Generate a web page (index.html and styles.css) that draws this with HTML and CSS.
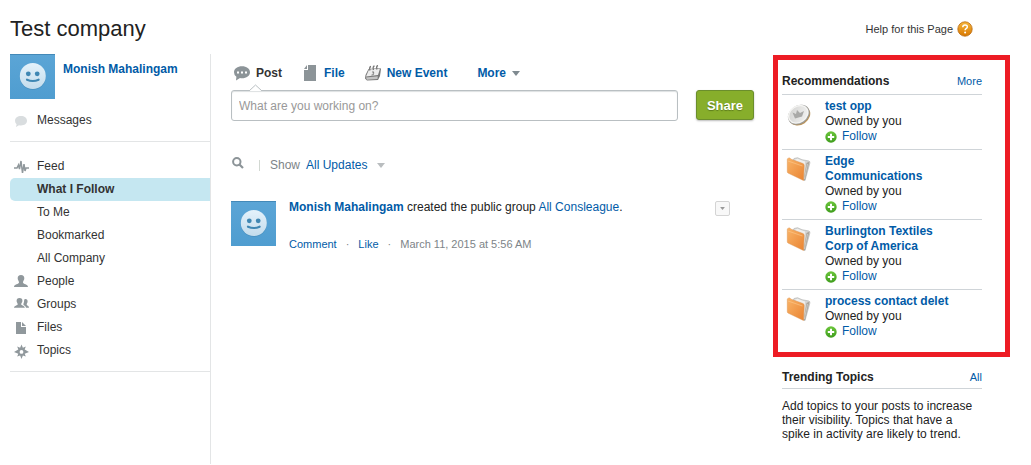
FILE: index.html
```html
<!DOCTYPE html>
<html lang="en">
<head>
    <meta charset="UTF-8">
    <meta name="viewport" content="width=device-width, initial-scale=1.0">
    <title>Test company</title>
    <link rel="stylesheet" href="styles.css">
</head>
<body>
    <!-- shared icons -->
    <svg class="sprite" width="0" height="0" aria-hidden="true">
        <defs>
            <linearGradient id="face-bg" x1="0" y1="0" x2="0" y2="1">
                <stop offset="0" stop-color="#5ba5d6"/><stop offset="1" stop-color="#4f9dd0"/>
            </linearGradient>
            <linearGradient id="face-fill" x1="0" y1="0" x2="0" y2="1">
                <stop offset="0" stop-color="#e4f2fb"/><stop offset="1" stop-color="#c3dcec"/>
            </linearGradient>
            <linearGradient id="folder-fill" x1="0" y1="0" x2="1" y2="1">
                <stop offset="0" stop-color="#f9b468"/><stop offset="1" stop-color="#e98331"/>
            </linearGradient>
            <linearGradient id="green-fill" x1="0" y1="0" x2="0" y2="1">
                <stop offset="0" stop-color="#6cc63c"/><stop offset="1" stop-color="#3e9d1c"/>
            </linearGradient>
            <linearGradient id="coin-fill" x1="0" y1="0" x2="1" y2="1">
                <stop offset="0" stop-color="#d2d2d0"/><stop offset="1" stop-color="#f3f3f2"/>
            </linearGradient>
            <linearGradient id="help-fill" x1="0" y1="0" x2="0" y2="1">
                <stop offset="0" stop-color="#f6b63c"/><stop offset="1" stop-color="#d97800"/>
            </linearGradient>
        </defs>
        <symbol id="face" viewBox="0 0 45 45">
            <rect width="45" height="45" fill="url(#face-bg)"/>
            <path d="M0 .5h45" stroke="#4389b8"/>
            <circle cx="22.800" cy="22.700" r="13" fill="#468fbe"/>
            <circle cx="22.800" cy="22" r="13" fill="url(#face-fill)"/>
            <circle cx="18.300" cy="19.800" r="2.400" fill="#3f87b3"/>
            <circle cx="27.200" cy="19.800" r="2.400" fill="#3f87b3"/>
            <path d="M17 25.700q5.800 2.600 11.600 0" fill="none" stroke="#3f87b3" stroke-width="2.200" stroke-linecap="round"/>
        </symbol>
        <symbol id="folder" viewBox="0 0 26 26">
            <path d="M7 3l1-1.500L11.500.7l4.500 2 7 1.300q1 .5.900 2L19 23.500l-2-1z" fill="#d6d6d4" stroke="#b0b0ae" stroke-width=".6"/>
            <path d="M9 2.500l2.500-.8L16 3.500l3 1-1 14z" fill="#efefee"/>
            <path d="M20.500 6l3-1.500L19 23.500l-1.500-.5z" fill="#aaa59c"/>
            <path d="M21.500 7l-3.200 15" stroke="#e4e2de" stroke-width=".6"/>
            <path d="M1.300 2.500q0-1 1-1.300l1.500-.3 1.200 1.300L17 6.500q1.300.7 1.200 2L17.500 23.500 2 16q-.7-.5-.7-1.500z" fill="url(#folder-fill)" stroke="#dd9450" stroke-width=".5"/>
            <path d="M2 4l14.500 5" stroke="#fbcb92" stroke-width=".6"/>
        </symbol>
        <symbol id="plus" viewBox="0 0 12 12">
            <circle cx="6" cy="6" r="5.700" fill="url(#green-fill)"/>
            <path d="M6 2.800v6.400M2.800 6h6.400" stroke="#fff" stroke-width="2"/>
        </symbol>
        <symbol id="arrow" viewBox="0 0 8 5">
            <path d="M0 0h8L4 5z" fill="currentColor"/>
        </symbol>
    </svg>

    <header class="page-header">
        <h1>Test company</h1>
        <a class="help" href="#">Help for this Page
            <svg width="16" height="16" viewBox="0 0 16 16" aria-hidden="true">
                <circle cx="8" cy="8" r="7.200" fill="url(#help-fill)" stroke="#b96a10" stroke-width=".8"/>
                <path d="M5.800 6.200q0-2.200 2.300-2.200t2.200 1.900q0 1-1.200 1.700-1 .6-1 1.700" fill="none" stroke="#fff" stroke-width="1.500"/>
                <circle cx="8.100" cy="11.500" r="1" fill="#fff"/>
            </svg>
        </a>
    </header>

    <div class="columns">
        <nav class="sidebar">
            <div class="profile">
                <svg class="avatar" aria-hidden="true"><use href="#face"/></svg>
                <a href="#">Monish Mahalingam</a>
            </div>
            <ul class="menu messages">
                <li><a href="#">
                    <svg class="menu-icon" viewBox="0 0 16 16"><path d="M7 3c3.400 0 6 2 6 4.800s-2.600 4.700-6 4.700q-1 0-2-.3L2 14l.6-2.700Q1 10 1 7.800C1 5 3.600 3 7 3z" fill="#d9dddf"/></svg>
                    Messages</a></li>
            </ul>
            <ul class="menu">
                <li><a href="#">
                    <svg class="menu-icon" viewBox="0 0 16 16"><path d="M0 9h3l1.500-3 1 4L7 2l1.500 12L10 5l1 7 1-3h3" fill="none" stroke="#90989c" stroke-width="1.500"/></svg>
                    Feed</a></li>
                <li class="active"><a href="#">What I Follow</a></li>
                <li><a href="#">To Me</a></li>
                <li><a href="#">Bookmarked</a></li>
                <li><a href="#">All Company</a></li>
                <li><a href="#">
                    <svg class="menu-icon" viewBox="0 0 16 16"><path d="M7 1c2.300 0 3.400 1.500 3.300 3.500C10.200 6.300 9 7 9 8.500c0 1.800 5 1.500 5 4.500H0c0-3 5-2.700 5-4.500C5 7 3.800 6.300 3.700 4.500 3.600 2.500 4.700 1 7 1z" fill="#90989c"/></svg>
                    People</a></li>
                <li><a href="#">
                    <svg class="menu-icon" viewBox="0 0 16 16"><path d="M5.500 1c2.200 0 3 1.200 2.900 3-.1 1.600-1.200 2-1.200 3.300 0 1.400 3.600 1.100 3.600 3.500H0c0-2.400 3.700-2.100 3.700-3.500C3.700 6 2.700 5.600 2.600 4c0-1.800.8-3 2.900-3zM11.500 2c1.500 0 2.200 1 2.100 2.400 0 1.400-.9 1.900-.9 3 0 1.200 2.300 1 2.300 3.400h-3c0-2-2.600-2.100-2.600-3.300 0-1.400.7-2 .7-3.800 0-1 .4-1.700 1.400-1.700z" fill="#90989c"/></svg>
                    Groups</a></li>
                <li><a href="#">
                    <svg class="menu-icon" viewBox="0 0 16 16"><path d="M2 2h5v5h5v7H2zM8 2l4 4H8z" fill="#90989c"/></svg>
                    Files</a></li>
                <li><a href="#">
                    <svg class="menu-icon" viewBox="0 0 16 16"><path d="M7.500 1.500l1.400 3.200 2.900-1.200-1.100 3L15 9l-4.300 1.800 1.100 2.800-2.900-1.100-1.400 3.500-1.400-3.500-2.900 1.100 1.100-2.800L0 9l4.300-2.500-1.100-3 2.900 1.200zM7.500 7a1.900 1.900 0 1 0 0 3.800A1.900 1.900 0 0 0 7.500 7z" fill="#90989c" fill-rule="evenodd"/></svg>
                    Topics</a></li>
            </ul>
        </nav>

        <main class="main">
            <div class="tabs">
                <a class="tab current" href="#">
                    <svg width="16" height="16" viewBox="0 0 16 16"><path d="M8 1.200c4.500 0 8 2.500 8 6s-3.500 6-8 6q-1 0-2-.2L2 15.500l.4-3.700Q0 10.300 0 7.200c0-3.500 3.500-6 8-6z" fill="#8c9498"/><path d="M3 6.500h2v2H3zM7 6.500h2v2H7zM11 6.500h2v2h-2z" fill="#fff"/></svg>
                    Post</a>
                <a class="tab" href="#">
                    <svg width="16" height="16" viewBox="0 0 16 16"><path d="M6 0h8v16H2V5h4z" fill="#8c9498"/><path d="M5 0v4H2z" fill="#8c9498"/></svg>
                    File</a>
                <a class="tab" href="#">
                    <svg width="16" height="16" viewBox="0 0 16 16"><path d="M3.500 4L15 3q1 .3.900 1.500L15 11l-2 4-11 .5-2-2L.5 10z" fill="#777"/><path d="M4 4.500l11-1-2 6.500-12 1.500z" fill="#ececec"/><path d="M.8 12.500l12-1.200-.3 2.700-10.500.7z" fill="#c4c4c4"/><path d="M5 5.500q-1-3.500 1-4M8.500 5q-1-3.500 1-4M12 4.500q-1-3.500 1-4" fill="none" stroke="#777" stroke-width="1.300"/><path d="M7 7h2L8 8.300q1.500.3.300 1.400L6.500 10" fill="none" stroke="#777" stroke-width=".9"/></svg>
                    New Event</a>
                <a class="tab more" href="#">More <svg class="arrow"><use href="#arrow"/></svg></a>
            </div>
            <form class="publisher">
                <div class="field">
                    <svg class="pointer" viewBox="0 0 13 7" aria-hidden="true"><path d="M0 7l6.500-6L13 7" fill="#fff" stroke="#b9bfc2"/></svg>
                    <input type="text" id="post" aria-label="Post" placeholder="What are you working on?">
                </div>
                <button type="submit">Share</button>
            </form>
            <div class="filter">
                <svg width="12" height="12" viewBox="0 0 12 12" aria-hidden="true"><circle cx="4.800" cy="4.800" r="3.700" fill="none" stroke="#8c9498" stroke-width="2"/><path d="M7.500 7.500l3.500 3.500" stroke="#8c9498" stroke-width="2.200"/></svg>
                <span class="bar"></span>
                <span>Show</span>
                <a href="#">All Updates <svg class="arrow"><use href="#arrow"/></svg></a>
            </div>
            <article class="feed-item">
                <svg class="avatar" aria-hidden="true"><use href="#face"/></svg>
                <div class="feed-body">
                    <p><a href="#"><b>Monish Mahalingam</b></a> created the public group <a href="#">All Consleague</a>.</p>
                    <div class="feed-actions">
                        <a href="#">Comment</a><span>·</span><a href="#">Like</a><span>·</span><time>March 11, 2015 at 5:56 AM</time>
                    </div>
                </div>
                <button class="item-menu" type="button" aria-label="Options"><svg class="arrow"><use href="#arrow"/></svg></button>
            </article>
        </main>

        <aside class="side">
            <section class="recommendations">
                <div class="side-title"><h2>Recommendations</h2><a href="#">More</a></div>
                <div class="rec">
                    <svg class="rec-icon" viewBox="0 0 26 26"><ellipse cx="13.600" cy="13.800" rx="11.300" ry="9" transform="rotate(-34 13.600 13.800)" fill="#bd9354"/><ellipse cx="12.800" cy="12.800" rx="11.600" ry="9.200" transform="rotate(-34 12.800 12.800)" fill="#999996"/><ellipse cx="12.300" cy="12.300" rx="11" ry="8.700" transform="rotate(-34 12.300 12.300)" fill="#f4f4f2"/><ellipse cx="12.300" cy="12.300" rx="9.600" ry="7.400" transform="rotate(-34 12.300 12.300)" fill="url(#coin-fill)"/><path d="M6.500 10.500l3.500 1.500L11 8l3 3 4-2-2 5.500-7 2z" fill="#a9a9a7"/></svg>
                    <div><a class="name" href="#">test opp</a><p>Owned by you</p><a class="follow" href="#"><svg><use href="#plus"/></svg>Follow</a></div>
                </div>
                <div class="rec">
                    <svg class="rec-icon"><use href="#folder"/></svg>
                    <div><a class="name" href="#">Edge Communications</a><p>Owned by you</p><a class="follow" href="#"><svg><use href="#plus"/></svg>Follow</a></div>
                </div>
                <div class="rec">
                    <svg class="rec-icon"><use href="#folder"/></svg>
                    <div><a class="name" href="#">Burlington Textiles Corp of America</a><p>Owned by you</p><a class="follow" href="#"><svg><use href="#plus"/></svg>Follow</a></div>
                </div>
                <div class="rec">
                    <svg class="rec-icon"><use href="#folder"/></svg>
                    <div><a class="name" href="#">process contact delet</a><p>Owned by you</p><a class="follow" href="#"><svg><use href="#plus"/></svg>Follow</a></div>
                </div>
            </section>
            <section class="trending">
                <div class="side-title"><h2>Trending Topics</h2><a href="#">All</a></div>
                <p>Add topics to your posts to increase their visibility. Topics that have a spike in activity are likely to trend.</p>
            </section>
        </aside>
    </div>
</body>
</html>
```
FILE: styles.css
```css
* {
    box-sizing: border-box;
}
body {
    margin: 0;
    padding: 0 21px 1px 10px;
    min-height: 100vh;
    display: flex;
    flex-direction: column;
    font-family: "Liberation Sans", Arial, sans-serif;
    font-size: 12px;
    line-height: 15px;
    color: #222;
    background-color: #fff;
}
h1, h2, p, ul {
    margin: 0;
    padding: 0;
}
a {
    color: #015ba7;
    text-decoration: none;
}
svg {
    flex: none;
}
.sprite {
    position: absolute;
}
.arrow {
    width: 8px;
    height: 5px;
}
.avatar {
    width: 45px;
    height: 45px;
}

.page-header {
    display: flex;
    justify-content: space-between;
    align-items: center;
    height: 54px;
    padding: 4px 37px 0 0;
}
h1 {
    font-size: 22px;
    font-weight: normal;
    line-height: 26px;
}
.help {
    display: flex;
    align-items: center;
    gap: 4px;
    font-size: 11px;
    color: #333;
}

.columns {
    display: flex;
    flex: 1;
}

/* left menu */
.sidebar {
    flex: none;
    width: 201px;
    border-right: 1px solid #e3e5e6;
}
.profile {
    display: flex;
    gap: 8px;
    font-weight: bold;
}
.profile a {
    padding-top: 8px;
}
.menu {
    list-style: none;
    padding: 13px 0 9px;
    border-bottom: 1px solid #e3e5e6;
}
.messages {
    padding: 10px 0 9px;
}
.menu a {
    display: flex;
    align-items: center;
    height: 23px;
    padding-left: 27px;
    color: #333;
}
.menu-icon {
    width: 16px;
    height: 16px;
    margin: 0 7px 0 -23px;
}
.menu .active a {
    font-weight: bold;
    background-color: #c5e7f1;
    border-radius: 5px 0 0 5px;
}

/* publisher and feed */
.main {
    flex: 1;
    padding: 11px 19px 0 20px;
}
.tabs {
    display: flex;
    align-items: center;
    gap: 20px;
    padding-left: 3px;
    height: 16px;
    font-weight: bold;
}
.tab {
    display: flex;
    align-items: center;
    gap: 6px;
}
.tab.current {
    color: #333;
}
.more {
    padding-left: 10px;
}
.more .arrow {
    color: #7f8a90;
}
.publisher {
    display: flex;
    gap: 18px;
    margin-top: 9px;
}
.field {
    flex: 1;
    position: relative;
}
.pointer {
    position: absolute;
    left: 18px;
    top: -6px;
    width: 13px;
    height: 7px;
}
.field input {
    display: block;
    width: 100%;
    height: 31px;
    padding: 0 7px;
    font: inherit;
    border: 1px solid #b9bfc2;
    border-radius: 3px;
    box-shadow: inset 0 1px 1px #dde0e1;
}
.field input::placeholder {
    color: #999;
    opacity: 1;
}
.publisher button {
    width: 58px;
    height: 30px;
    padding: 0;
    font: bold 13px "Liberation Sans", Arial, sans-serif;
    color: #fff;
    background-color: #87ae2b;
    border: 1px solid #6b8e2c;
    border-radius: 3px;
    box-shadow: 0 1px 2px #bbb;
    text-shadow: 0 1px 1px #5d7c1c;
}
.filter {
    display: flex;
    align-items: center;
    gap: 6px;
    margin: 36px 0 27px;
    padding-left: 1px;
    color: #7d8488;
}
.filter .bar {
    width: 1px;
    height: 11px;
    margin: 0 4px 0 9px;
    background-color: #d2d8d2;
}
.filter > svg {
    margin-bottom: 5px;
}
.filter a {
    display: flex;
    align-items: center;
    gap: 10px;
}
.filter .arrow {
    color: #b9bdbf;
}
.feed-item {
    display: flex;
    align-items: flex-start;
    gap: 13px;
}
.feed-body {
    flex: 1;
}
.feed-body p {
    line-height: 13px;
}
.feed-actions {
    display: flex;
    gap: 9px;
    margin-top: 23px;
    font-size: 11px;
    color: #7d8488;
}
.item-menu {
    display: flex;
    align-items: center;
    justify-content: center;
    width: 15px;
    height: 15px;
    margin-right: 24px;
    padding: 0;
    color: #999;
    background-color: #f8f8f8;
    border: 1px solid #d4d4d4;
    border-radius: 2px;
}
.item-menu .arrow {
    width: 5px;
    height: 3px;
}

/* right column */
.side {
    flex: none;
    width: 237px;
    padding-top: 1px;
}
.recommendations {
    padding: 13px 23px 13px 4px;
    border: 5px solid #ed1c24;
}
.side-title {
    display: flex;
    justify-content: space-between;
    align-items: center;
    height: 22px;
    padding-bottom: 4px;
    border-bottom: 1px solid #cfd4d8;
}
.side-title h2 {
    font-size: 12px;
}
.side-title a {
    font-size: 11px;
}
.rec {
    display: flex;
    gap: 13px;
    padding: 4px 32px 5px 4px;
    border-bottom: 1px solid #cfd4d8;
}
.rec:last-child {
    padding-bottom: 0;
    border-bottom: none;
}
.rec-icon {
    width: 26px;
    height: 26px;
    margin-top: 3px;
}
.rec .name {
    display: block;
    font-weight: bold;
}
.follow {
    display: flex;
    align-items: center;
    gap: 5px;
}
.follow svg {
    width: 12px;
    height: 12px;
}
.trending {
    padding: 13px 28px 0 9px;
}
.trending .side-title {
    height: 19px;
}
.trending p {
    padding-top: 10px;
    line-height: 14px;
}
```
